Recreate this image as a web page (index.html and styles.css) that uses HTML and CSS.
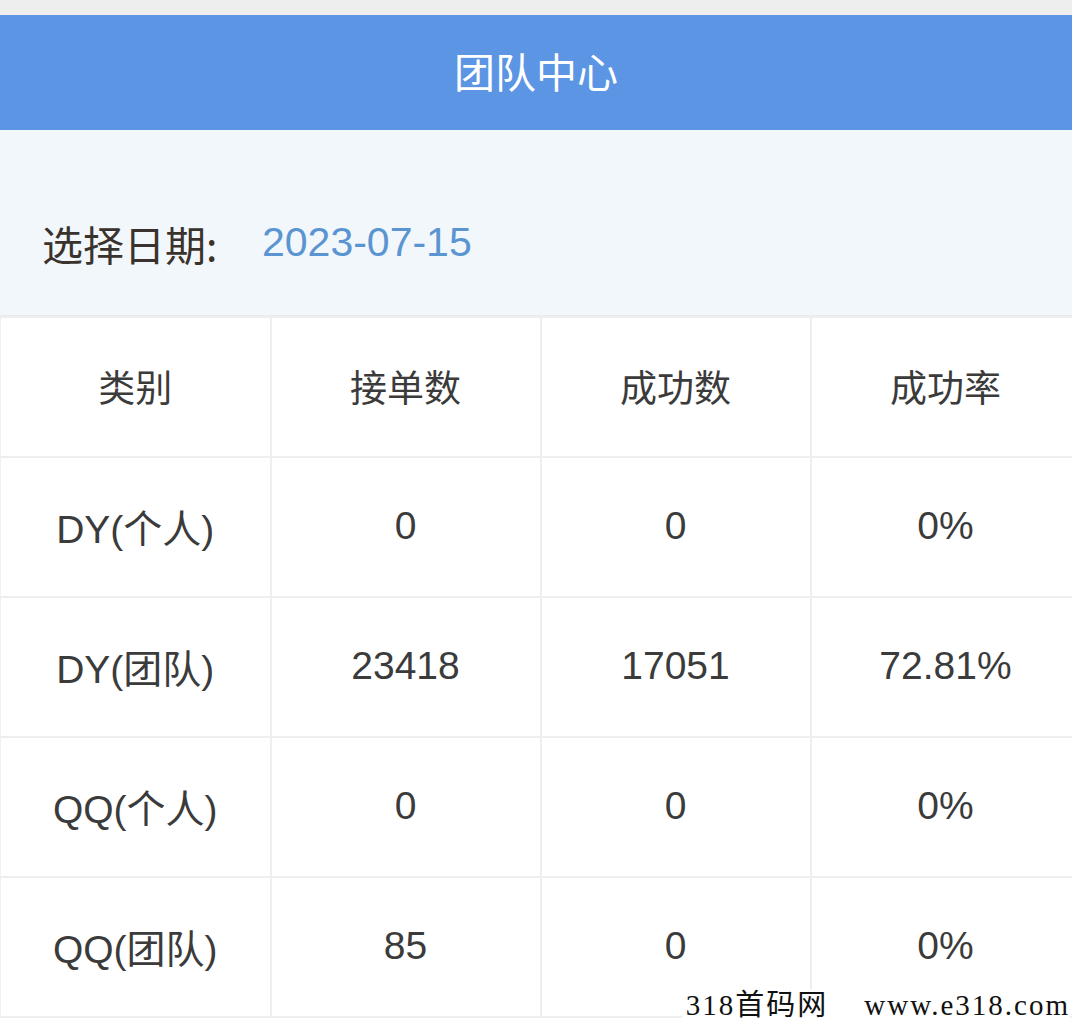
FILE: index.html
```html
<!DOCTYPE html>
<html lang="zh">
<head>
<meta charset="utf-8">
<title>团队中心</title>
<link rel="stylesheet" href="styles.css">
</head>
<body>
<div class="page">
  <div class="topstrip"></div>
  <header class="titlebar">团队中心</header>
  <section class="datebar">
    <span class="date-label">选择日期:</span>
    <span class="date-value">2023-07-15</span>
  </section>
  <table class="stats">
    <colgroup>
      <col class="c1"><col class="c2"><col class="c3"><col class="c4">
    </colgroup>
    <thead>
      <tr><th>类别</th><th>接单数</th><th>成功数</th><th>成功率</th></tr>
    </thead>
    <tbody>
      <tr><td>DY(个人)</td><td>0</td><td>0</td><td>0%</td></tr>
      <tr><td>DY(团队)</td><td>23418</td><td>17051</td><td>72.81%</td></tr>
      <tr><td>QQ(个人)</td><td>0</td><td>0</td><td>0%</td></tr>
      <tr><td>QQ(团队)</td><td>85</td><td>0</td><td>0%</td></tr>
    </tbody>
  </table>
  <div class="watermark"><span class="wm-cn">318首码网</span><span class="wm-url">www.e318.com</span></div>
</div>
</body>
</html>
```

FILE: styles.css
```css
html, body {
  margin: 0;
  padding: 0;
  background: #ffffff;
}
body {
  font-family: "Liberation Sans", "Noto Sans CJK SC", sans-serif;
  color: #333333;
  width: 1072px;
  height: 1021px;
  overflow: hidden;
}
.page {
  position: relative;
  width: 1072px;
  height: 1021px;
  overflow: hidden;
}
.topstrip {
  height: 15px;
  background: #eeeeee;
}
.titlebar {
  height: 115px;
  background: #5b95e3;
  color: #ffffff;
  font-size: 41px;
  display: flex;
  align-items: center;
  justify-content: center;
  padding-bottom: 6px;
  box-sizing: border-box;
  font-family: "Noto Sans CJK SC", sans-serif;
}
.datebar {
  height: 186px;
  background: #f2f7fb;
  display: flex;
  align-items: center;
  padding-left: 42px;
  padding-top: 40px;
  box-sizing: border-box;
  font-size: 41px;
  border-bottom: 1px solid #e8ecef;
}
.date-label {
  color: #3a332d;
  font-family: "Noto Sans CJK SC", sans-serif;
  width: 220px;
}
.date-value {
  color: #5a95d2;
}
.stats {
  border-collapse: collapse;
  table-layout: fixed;
  width: 1080px;
}
.c1, .c2, .c3, .c4 { width: 270px; }
.stats th, .stats td {
  height: 136px;
  padding: 0 0 2px 0;
  text-align: center;
  vertical-align: middle;
  font-weight: normal;
  font-size: 39px;
  color: #3b3b3b;
  border: 2px solid #eceeef;
}
.stats th {
  font-family: "Noto Sans CJK SC", sans-serif;
  font-size: 37px;
}
.stats td:first-child, .stats th:first-child {
  border-left: 1px solid #f0f1f2;
}
.watermark {
  position: absolute;
  right: 2px;
  bottom: 0;
  height: 32px;
  padding-left: 4px;
  background: #ffffff;
  color: #111111;
  font-size: 29px;
  line-height: 32px;
  white-space: nowrap;
  display: flex;
  gap: 36px;
}
.wm-cn {
  font-family: "Liberation Serif", "Noto Sans CJK SC", serif;
  letter-spacing: 2px;
}
.wm-url {
  font-family: "Liberation Serif", serif;
  letter-spacing: 2px;
}
```
